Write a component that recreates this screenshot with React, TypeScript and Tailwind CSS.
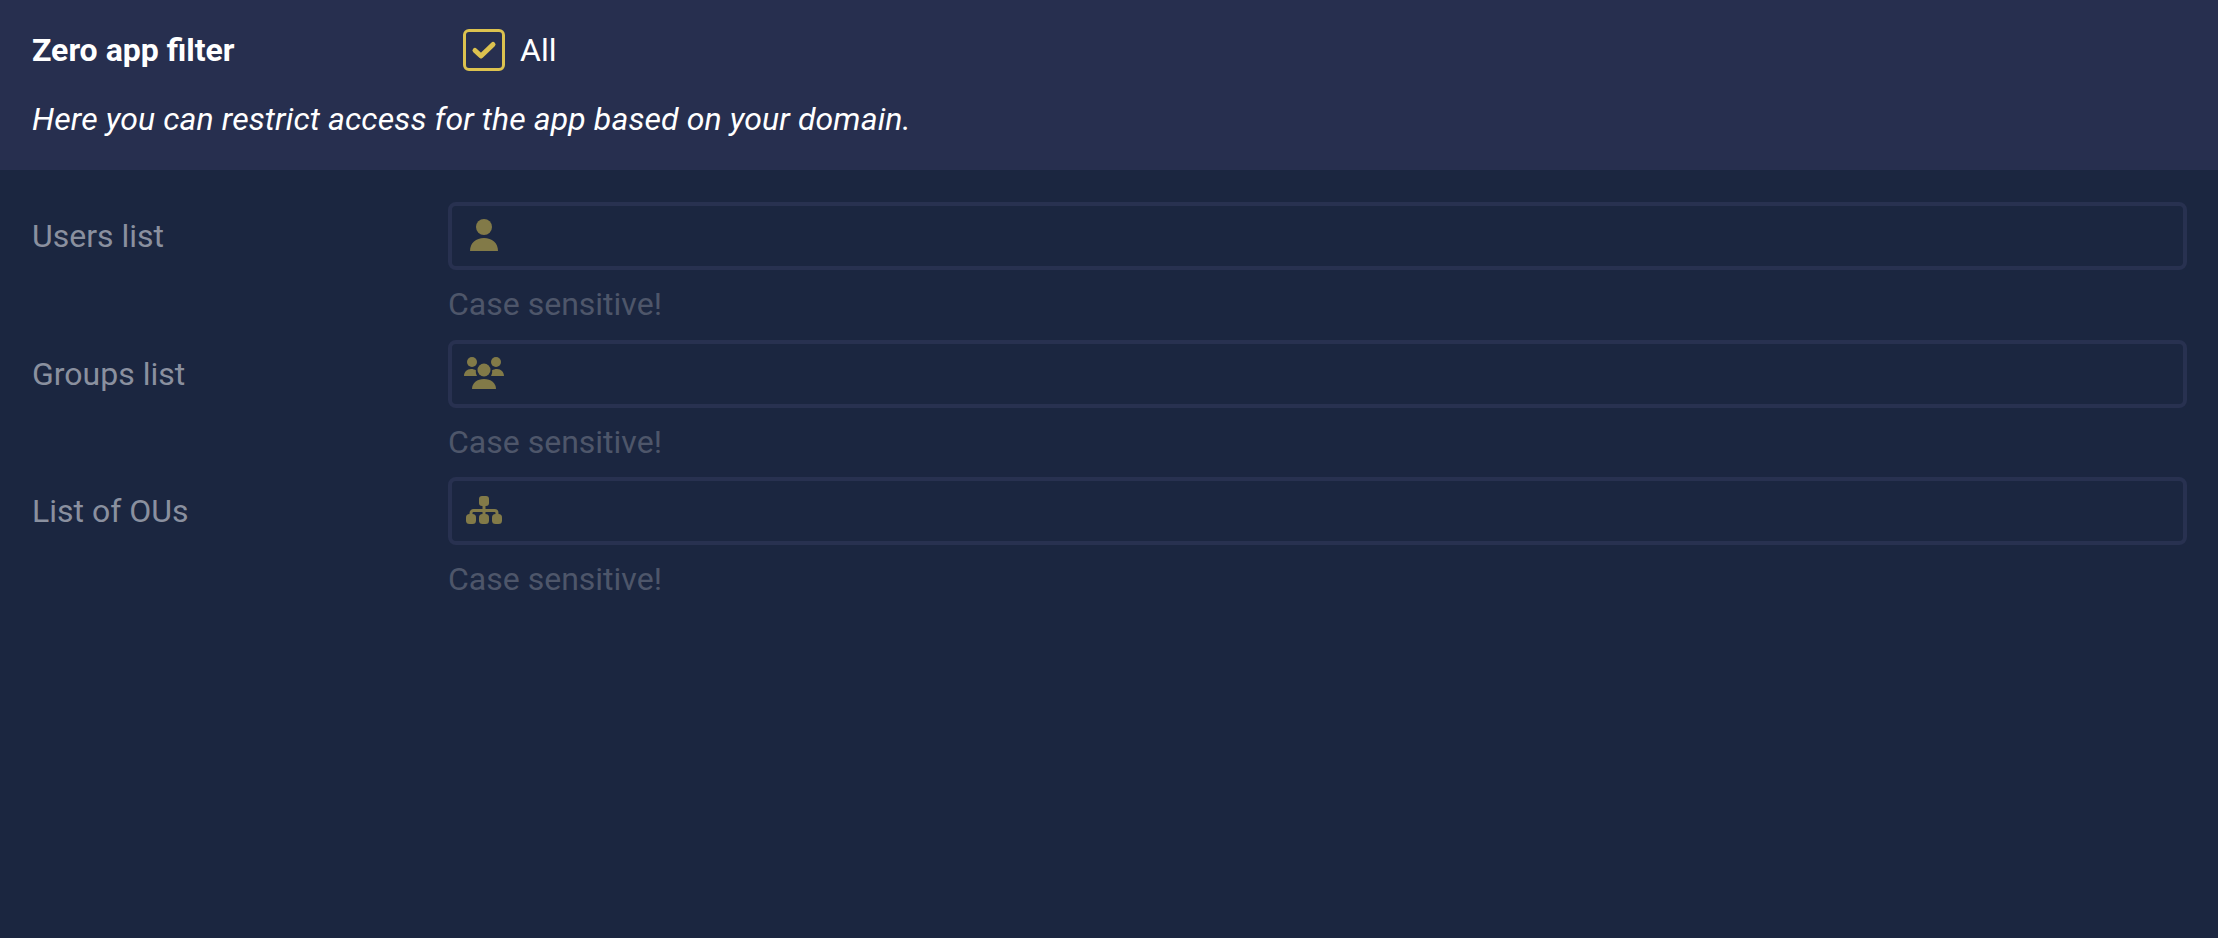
import React from "react";

const Icon = ({ children }: { children: React.ReactNode }) => (
  <svg width="40" height="36" viewBox="0 0 40 36" fill="#827a48" className="shrink-0">
    {children}
  </svg>
);

const UserIcon = () => (
  <Icon>
    <circle cx="20" cy="9" r="8" />
    <path d="M6 33c0-8 6-13 14-13s14 5 14 13z" />
  </Icon>
);

const GroupIcon = () => (
  <Icon>
    <circle cx="8" cy="6" r="5" />
    <circle cx="32" cy="6" r="5" />
    <path d="M0 20c0-4 3-7 7-7 2 0 4 .5 5 1.500-.5 1.500 0 3.500 1 5.500z" />
    <path d="M40 20c0-4-3-7-7-7-2 0-4 .5-5 1.500.5 1.500 0 3.500-1 5.500z" />
    <circle cx="20" cy="14" r="6.500" />
    <path d="M8 33c0-6 5-10 12-10s12 4 12 10z" />
  </Icon>
);

const TreeIcon = () => (
  <Icon>
    <rect x="15" y="3" width="10" height="10" rx="3" />
    <rect x="2" y="21" width="10" height="10" rx="3.500" />
    <rect x="15" y="21" width="10" height="10" rx="3.500" />
    <rect x="28" y="21" width="10" height="10" rx="3.500" />
    <path d="M20 12V22M7 22V20a2.500 2.500 0 0 1 2.500-2.500H30.500A2.500 2.500 0 0 1 33 20V22" fill="none" stroke="#827a48" strokeWidth="3" />
  </Icon>
);

const Row = ({ label, icon }: { label: string; icon: React.ReactNode }) => (
  <div className="flex">
    <div className="w-[416px] shrink-0 pt-[16px] text-[#8a909f] leading-[36px]">{label}</div>
    <div className="flex-1">
      <div className="flex h-[68px] items-center rounded-[8px] border-4 border-[#283150] pl-[12px]">{icon}</div>
      <div className="h-[69.5px] pt-[16px] leading-[36px] text-[#4e566a]">Case sensitive!</div>
    </div>
  </div>
);

export default function App() {
  return (
    <div className="min-h-[938px] bg-[#1b2640] font-['Roboto',sans-serif] text-[32px]">
      <div className="h-[170px] bg-[#272f4f] pl-[32px] text-white">
        <div className="flex h-[100px] items-center">
          <div className="w-[431px] shrink-0 font-bold">Zero app filter</div>
          <div className="flex h-[42px] w-[42px] items-center justify-center rounded-[6px] border-[3px] border-[#dcc24f]">
            <svg width="26" height="22" viewBox="0 0 26 22" fill="none" stroke="#dcc24f" strokeWidth="5" strokeLinecap="round" strokeLinejoin="round">
              <path d="M4 11.500l6 5.500L22 5.500" />
            </svg>
          </div>
          <div className="ml-[15px]">All</div>
        </div>
        <div className="pt-[1px] italic leading-[36px] tracking-[0.11px]">Here you can restrict access for the app based on your domain.</div>
      </div>
      <div className="pl-[32px] pr-[31px] pt-[32px]">
        <Row label="Users list" icon={<UserIcon />} />
        <Row label="Groups list" icon={<GroupIcon />} />
        <Row label="List of OUs" icon={<TreeIcon />} />
      </div>
    </div>
  );
}
